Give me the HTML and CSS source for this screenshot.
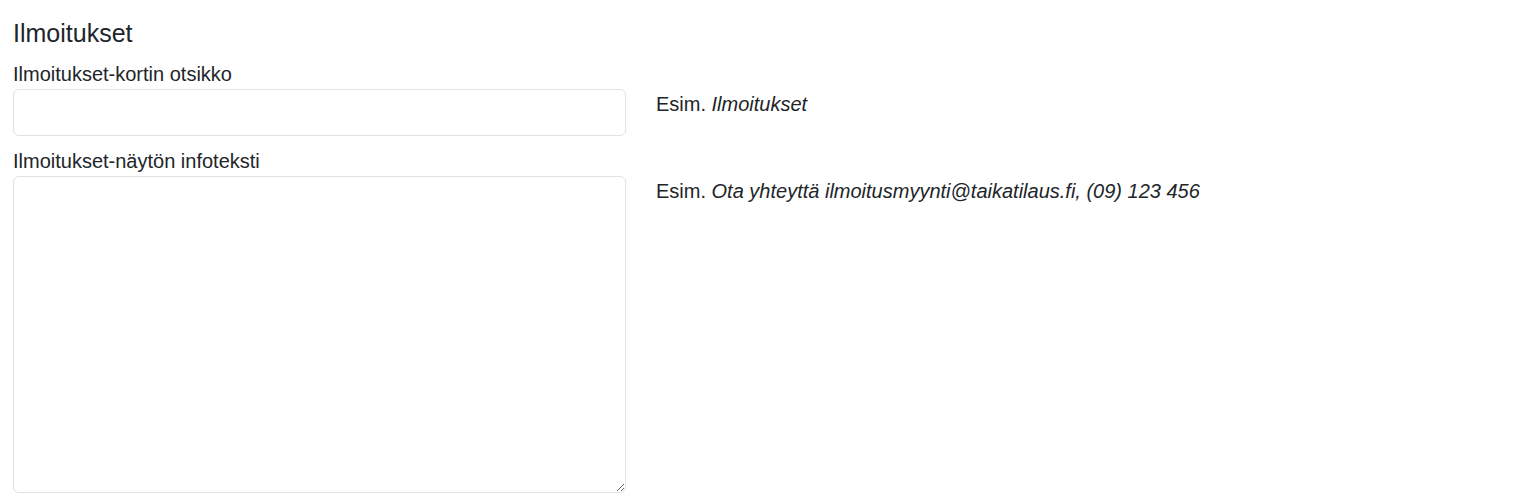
FILE: index.html
```html
<!DOCTYPE html>
<html lang="fi">
<head>
<meta charset="utf-8">
<title>Ilmoitukset</title>
<link rel="stylesheet" href="styles.css">
</head>
<body>
<section class="panel">
  <h2 class="title">Ilmoitukset</h2>
  <div class="field">
    <label class="label" for="otsikko">Ilmoitukset-kortin otsikko</label>
    <div class="row">
      <input id="otsikko" class="input" type="text">
      <p class="hint">Esim. <em>Ilmoitukset</em></p>
    </div>
  </div>
  <div class="field">
    <label class="label" for="info">Ilmoitukset-näytön infoteksti</label>
    <div class="row">
      <textarea id="info" class="input textarea"></textarea>
      <p class="hint">Esim. <em>Ota yhteyttä ilmoitusmyynti@taikatilaus.fi, (09) 123 456</em></p>
    </div>
  </div>
</section>
</body>
</html>
```
FILE: styles.css
```css
html, body {
  margin: 0;
  padding: 0;
  background: #fff;
}
body {
  font-family: "Liberation Sans", Arial, sans-serif;
  color: #212529;
  font-size: 20px;
}
.panel {
  padding: 19px 13px 0 13px;
  display: flex;
  flex-direction: column;
}
.title {
  margin: 0 0 11px 0;
  font-size: 25px;
  font-weight: 400;
  line-height: 29px;
}
.field {
  display: flex;
  flex-direction: column;
  margin-bottom: 10px;
}
.label {
  line-height: 30px;
}
.row {
  display: flex;
  gap: 30px;
  align-items: flex-start;
}
.input {
  box-sizing: border-box;
  width: 613px;
  height: 47px;
  border: 1px solid #dee2e6;
  border-radius: 6px;
  font: inherit;
  margin: 0;
  padding: 6px 12px;
  background: #fff;
  display: block;
}
.textarea {
  height: 317px;
  resize: vertical;
}
.hint {
  margin: 0;
  line-height: 30px;
}
```
